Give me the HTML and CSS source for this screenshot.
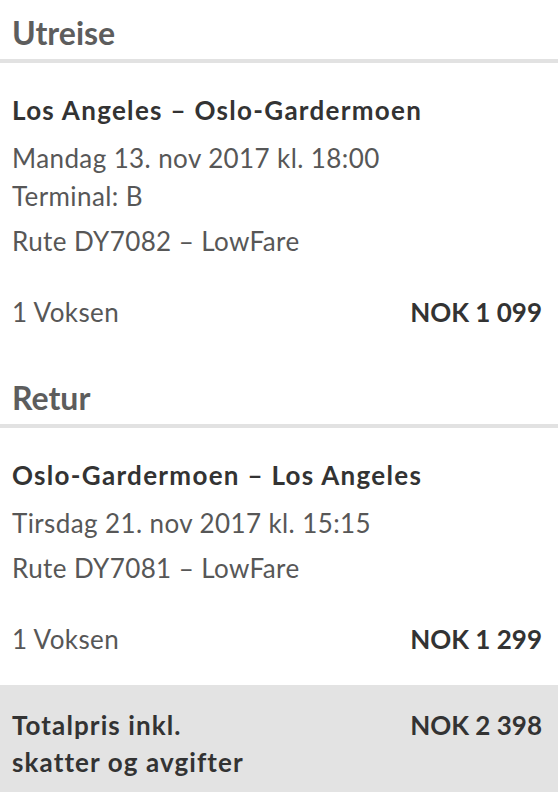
FILE: index.html
```html
<!DOCTYPE html>
<html lang="no">
<head>
    <meta charset="UTF-8">
    <meta name="viewport" content="width=device-width, initial-scale=1.0">
    <title>Reiseoversikt</title>
    <link rel="stylesheet" href="styles.css">
</head>
<body>
    <section class="leg">
        <h2 class="leg-title">Utreise</h2>
        <div class="leg-body">
            <h3 class="route">Los Angeles – Oslo-Gardermoen</h3>
            <p class="times">Mandag 13. nov 2017 kl. 18:00<br>Terminal: B</p>
            <p class="flight">Rute DY7082 – LowFare</p>
            <div class="price-row">
                <span>1 Voksen</span>
                <strong>NOK 1 099</strong>
            </div>
        </div>
    </section>

    <section class="leg">
        <h2 class="leg-title">Retur</h2>
        <div class="leg-body">
            <h3 class="route">Oslo-Gardermoen – Los Angeles</h3>
            <p class="times">Tirsdag 21. nov 2017 kl. 15:15</p>
            <p class="flight">Rute DY7081 – LowFare</p>
            <div class="price-row">
                <span>1 Voksen</span>
                <strong>NOK 1 299</strong>
            </div>
        </div>
    </section>

    <div class="total">
        <span class="total-label">Totalpris inkl. skatter og avgifter</span>
        <strong>NOK 2 398</strong>
    </div>
</body>
</html>
```

FILE: styles.css
```css
body {
    margin: 0;
    font-family: Lato, "Open Sans", sans-serif;
    font-size: 26px;
    letter-spacing: 0.4px;
    color: #575757;
    background-color: #fff;
}
.leg + .leg {
    margin-top: 7px;
}
.leg-title {
    margin: 0;
    padding: 14px 16px 7px 12px;
    font-size: 32px;
    line-height: 38px;
    font-weight: 700;
    letter-spacing: 0;
    color: #5d5d5d;
    border-bottom: 4px solid #e2e2e2;
}
.leg-body {
    padding: 31px 16px 27px 12px;
}
.route {
    margin: 0 0 13px;
    font-size: 26px;
    line-height: 32px;
    font-weight: 700;
    letter-spacing: 1.3px;
    color: #333;
}
.times, .flight {
    margin: 0;
    line-height: 38px;
}
.flight {
    margin-top: 7px;
}
.price-row {
    display: flex;
    justify-content: space-between;
    margin-top: 33px;
    line-height: 38px;
}
.price-row strong, .total strong {
    color: #333;
    font-weight: 700;
    letter-spacing: 0;
}
.total {
    display: flex;
    justify-content: space-between;
    align-items: flex-start;
    padding: 22px 16px 20px 12px;
    background-color: #e3e3e3;
    font-weight: 700;
    color: #333;
    line-height: 37px;
}
.total-label {
    max-width: 260px;
    letter-spacing: 1.1px;
}
```
